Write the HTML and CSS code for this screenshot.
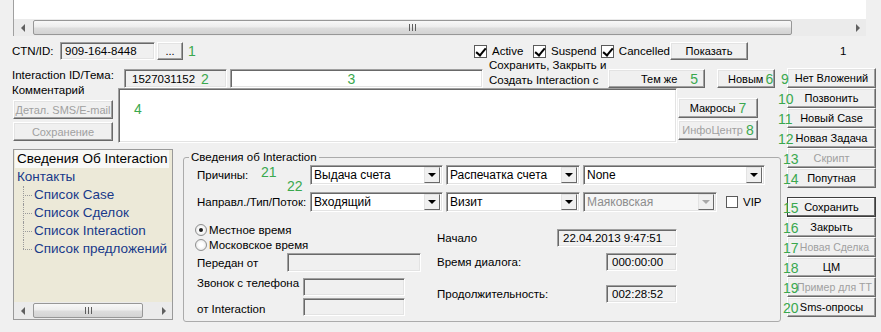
FILE: index.html
```html
<!DOCTYPE html>
<html lang="ru">
<head>
    <meta charset="UTF-8">
    <meta name="viewport" content="width=device-width, initial-scale=1.0">
    <title>Interaction</title>
    <link rel="stylesheet" href="styles.css">
</head>
<body>

    <div class="top-pane">
        <div class="hscroll top-scroll">
            <span class="arrow arrow-left"></span>
            <div class="track"><div class="thumb"><span class="grip"></span></div></div>
            <span class="arrow arrow-right"></span>
        </div>
    </div>

    <div class="row-ctn">
        <div class="ctn-block">
            <span class="lbl lbl-ctn">CTN/ID:</span>
            <div class="field sunken ctn-field">909-164-8448</div>
            <div class="btn btn-dots">...</div>
            <span class="num num-1">1</span>
        </div>
        <label class="chk chk-active"><span class="box checked"></span>Active</label>
        <label class="chk chk-suspend"><span class="box checked"></span>Suspend</label>
        <label class="chk chk-cancel"><span class="box checked"></span>Cancelled</label>
        <div class="btn btn-show">Показать</div>
        <span class="counter">1</span>
    </div>

    <div class="main">
        <div class="left">
            <div class="row-id">
                <span class="lbl lbl-id">Interaction ID/Тема:</span>
                <div class="field sunken id-field">1527031152<span class="num">2</span></div>
                <div class="field sunken topic-field"><span class="num">3</span></div>
                <div class="save-note">Сохранить, Закрыть и<br>Создать Interaction с</div>
                <div class="btn btn-same">Тем же<span class="num">5</span></div>
                <div class="btn btn-new">Новым<span class="num">6</span></div>
            </div>

            <div class="row-comment">
                <div class="comment-side">
                    <span class="lbl lbl-comment">Комментарий</span>
                    <div class="btn disabled side-btn">Детал. SMS/E-mail</div>
                    <div class="btn disabled side-btn side-save">Сохранение</div>
                </div>
                <div class="comment-box sunken"><span class="num">4</span></div>
                <div class="macro-side">
                    <div class="btn macro-btn">Макросы&nbsp;<span class="num">7</span></div>
                    <div class="btn disabled macro-btn">ИнфоЦентр&nbsp;<span class="num">8</span></div>
                </div>
            </div>

            <div class="row-bottom">
                <div class="tree">
                    <ul class="tree-list">
                        <li><span class="node selected">Сведения Об Interaction</span></li>
                        <li><span class="node link">Контакты</span>
                            <ul class="branch">
                                <li><span class="node link">Список Case</span></li>
                                <li><span class="node link">Список Сделок</span></li>
                                <li><span class="node link">Список Interaction</span></li>
                                <li><span class="node link">Список предложений</span></li>
                            </ul>
                        </li>
                    </ul>
                    <div class="hscroll tree-scroll">
                        <span class="arrow arrow-left"></span>
                        <div class="track"><div class="thumb"><span class="grip"></span></div></div>
                        <span class="arrow arrow-right"></span>
                    </div>
                </div>

                <fieldset class="group">
                    <legend>Сведения об Interaction</legend>
                    <div class="group-body">
                        <div class="grow">
                            <span class="glbl">Причины:<span class="num n21">21</span><span class="num n22">22</span></span>
                            <div class="combo sunken c-1"><span class="val">Выдача счета</span><span class="drop"></span></div>
                            <div class="combo sunken c-2"><span class="val">Распечатка счета</span><span class="drop"></span></div>
                            <div class="combo sunken c-3"><span class="val">None</span><span class="drop"></span></div>
                        </div>
                        <div class="grow">
                            <span class="glbl">Направл./Тип/Поток:</span>
                            <div class="combo sunken c-1"><span class="val">Входящий</span><span class="drop"></span></div>
                            <div class="combo sunken c-2"><span class="val">Визит</span><span class="drop"></span></div>
                            <div class="combo sunken c-4 disabled"><span class="val">Маяковская</span><span class="drop"></span></div>
                            <label class="chk chk-vip"><span class="box"></span>VIP</label>
                        </div>

                        <div class="times">
                            <div class="tcol-left">
                                <label class="radio"><span class="dot on"></span>Местное время</label>
                                <label class="radio"><span class="dot"></span>Московское время</label>
                                <div class="trow r-from">
                                    <span class="lbl w-from">Передан от</span>
                                    <div class="field sunken f-from"></div>
                                </div>
                                <div class="trow r-call">
                                    <span class="lbl w-call top">Звонок с телефона</span>
                                    <div class="field sunken f-call"></div>
                                </div>
                                <div class="trow r-int">
                                    <span class="lbl w-call bottom">от Interaction</span>
                                    <div class="field sunken f-call"></div>
                                </div>
                            </div>
                            <div class="tcol-right">
                                <div class="trow r-start">
                                    <span class="lbl w-start">Начало</span>
                                    <div class="field sunken f-start">22.04.2013 9:47:51</div>
                                </div>
                                <div class="trow r-dlg">
                                    <span class="lbl w-dlg">Время диалога:</span>
                                    <div class="field sunken f-time">000:00:00</div>
                                </div>
                                <div class="trow r-dur">
                                    <span class="lbl w-dlg">Продолжительность:</span>
                                    <div class="field sunken f-time">002:28:52</div>
                                </div>
                            </div>
                        </div>
                    </div>
                </fieldset>
            </div>
        </div>

        <div class="actions">
            <div class="btn act"><span class="num mid">9</span>Нет Вложений</div>
            <div class="btn act"><span class="num out">10</span>Позвонить</div>
            <div class="btn act"><span class="num out">11</span>Новый Case</div>
            <div class="btn act"><span class="num out">12</span>Новая Задача</div>
            <div class="btn act disabled"><span class="num">13</span>Скрипт</div>
            <div class="btn act"><span class="num">14</span>Попутная</div>
            <div class="btn act default gap"><span class="num">15</span>Сохранить</div>
            <div class="btn act"><span class="num">16</span>Закрыть</div>
            <div class="btn act disabled shift"><span class="num">17</span>Новая Сделка</div>
            <div class="btn act"><span class="num">18</span>ЦМ</div>
            <div class="btn act disabled shift"><span class="num">19</span>Пример для ТТ</div>
            <div class="btn act"><span class="num">20</span>Sms-опросы</div>
        </div>
    </div>

</body>
</html>
```

FILE: styles.css
```css
* {
    box-sizing: border-box;
}
body {
    margin: 0;
    width: 881px;
    height: 332px;
    overflow: hidden;
    background: #f0f0f0;
    color: #000;
    font-family: "Liberation Sans", Arial, sans-serif;
    font-size: 11.5px;
}
.num {
    color: #3aa84e;
    font-size: 14px;
    line-height: 16px;
}
.lbl {
    flex-shrink: 0;
    white-space: nowrap;
}

/* scrollbars */
.hscroll {
    display: flex;
    height: 17px;
    background: #ebebeb;
    flex-shrink: 0;
}
.arrow {
    width: 17px;
    display: flex;
    align-items: center;
    justify-content: center;
    flex-shrink: 0;
}
.arrow-left::before {
    content: "";
    border-style: solid;
    border-width: 4px 4px 4px 0;
    border-color: transparent #606060 transparent transparent;
}
.arrow-right::before {
    content: "";
    border-style: solid;
    border-width: 4px 0 4px 4px;
    border-color: transparent transparent transparent #606060;
}
.track {
    flex: 1;
    display: flex;
    align-items: center;
    padding: 0 2px;
}
.thumb {
    height: 15px;
    border: 1px solid #979797;
    border-radius: 2px;
    background: linear-gradient(#f8f8f8, #ededed 45%, #dddddd 55%, #d3d3d3);
    display: flex;
    align-items: center;
    justify-content: center;
}
.grip {
    width: 7px;
    height: 7px;
    background: repeating-linear-gradient(90deg, #5e5e5e 0 1px, transparent 1px 3px);
}
.top-scroll .thumb { width: 759px; }
.tree-scroll .thumb { width: 110px; }

/* 3d look */
.sunken {
    border: 1px solid;
    border-color: #a0a0a0 #fff #fff #a0a0a0;
    box-shadow: inset 1px 1px #696969, inset -1px -1px #e3e3e3;
}
.field {
    height: 18px;
    background: #f0f0f0;
    display: flex;
    align-items: center;
    padding: 0 4px;
    white-space: nowrap;
    flex-shrink: 0;
}
.btn {
    display: flex;
    align-items: center;
    justify-content: center;
    height: 20px;
    background: #f0f0f0;
    border: 1px solid;
    border-color: #fff #696969 #696969 #fff;
    box-shadow: inset -1px -1px #a0a0a0, inset 1px 1px #e3e3e3;
    white-space: nowrap;
    font-size: 11px;
    flex-shrink: 0;
}
.btn.disabled {
    color: #a0a0a0;
}
.chk {
    display: flex;
    align-items: center;
    gap: 5px;
    flex-shrink: 0;
}
.box {
    width: 13px;
    height: 13px;
    border: 1px solid #5a5a5a;
    background: #fff;
    position: relative;
}
.box.checked::after {
    content: "";
    position: absolute;
    left: 3px;
    top: 0;
    width: 4px;
    height: 8px;
    border: solid #000;
    border-width: 0 2px 2px 0;
    transform: rotate(40deg);
}

/* top pane */
.top-pane {
    margin-left: 13px;
    width: 853px;
    height: 36px;
    background: #fff;
    border-left: 1px solid #a0a0a0;
    display: flex;
    align-items: flex-end;
}
.top-scroll {
    width: 100%;
}

/* ctn row */
.row-ctn {
    display: flex;
    align-items: center;
    height: 18px;
    margin-top: 6px;
}
.ctn-block {
    display: flex;
    align-items: center;
    width: 474px;
    padding-left: 12px;
    flex-shrink: 0;
}
.lbl-ctn { width: 48px; }
.ctn-field { width: 95px; }
.btn-dots {
    margin-left: 2px;
    width: 26px;
    height: 18px;
}
.num-1 { margin-left: 5px; }
.chk-active { width: 59px; }
.chk-suspend { width: 68px; }
.chk-cancel { width: 69px; }
.btn-show {
    width: 78px;
    height: 18px;
}
.counter { margin-left: 92px; }

/* main area */
.main {
    display: flex;
    margin-top: 8px;
}
.left {
    width: 781px;
    flex-shrink: 0;
}
.row-id {
    display: flex;
    align-items: flex-end;
    height: 20px;
}
.lbl-id {
    margin-left: 12px;
    width: 112px;
    align-self: flex-start;
    line-height: 14px;
}
.id-field {
    width: 103px;
    height: 19px;
    padding-left: 7px;
}
.id-field .num { margin-left: 6px; }
.topic-field {
    margin-left: 3px;
    width: 253px;
    height: 19px;
    background: #fff;
    justify-content: center;
    padding-right: 14px;
}
.save-note {
    margin-left: 6px;
    width: 119px;
    height: 30px;
    line-height: 15px;
    white-space: nowrap;
    flex-shrink: 0;
}
.btn-same {
    width: 97px;
    height: 19px;
    justify-content: flex-start;
    padding-left: 32px;
}
.btn-same .num { margin-left: 13px; }
.btn-new {
    margin-left: 12px;
    width: 58px;
    height: 19px;
    justify-content: flex-start;
    padding-left: 10px;
}
.btn-new .num { margin-left: 2px; }

/* comment row */
.row-comment {
    display: flex;
    height: 55px;
}
.comment-side {
    width: 118px;
    display: flex;
    flex-direction: column;
    flex-shrink: 0;
}
.lbl-comment {
    margin: -4px 0 0 12px;
    line-height: 13px;
}
.side-btn {
    margin: 3px 0 0 13px;
    width: 100px;
    height: 19px;
}
.comment-box {
    width: 559px;
    height: 55px;
    background: #fff;
    padding: 12px 0 0 15px;
    flex-shrink: 0;
}
.macro-side {
    margin-left: 1px;
    width: 80px;
    padding-top: 10px;
    display: flex;
    flex-direction: column;
    gap: 2px;
}
.macro-btn { width: 80px; }

/* bottom: tree + group */
.row-bottom {
    display: flex;
    margin-top: 6px;
}
.tree {
    margin-left: 13px;
    width: 160px;
    height: 171px;
    background: #ece9d8;
    border: 1px solid #9a9a9a;
    display: flex;
    flex-direction: column;
    flex-shrink: 0;
}
.tree-list {
    flex: 1;
    margin: 0;
    padding: 0;
    list-style: none;
    font-size: 13.5px;
    overflow: hidden;
}
.tree-list li {
    line-height: 18px;
}
.node {
    display: inline-block;
    height: 18px;
    padding: 0 2px;
    margin-left: 1px;
    white-space: nowrap;
}
.node.selected { background: #f8f8f6; }
.node.link { color: #18398a; }
.branch {
    list-style: none;
    margin: 0;
    padding-left: 17px;
}
.branch li {
    position: relative;
}
.branch li::before {
    content: "";
    position: absolute;
    left: -8px;
    top: 9px;
    width: 9px;
    border-top: 1px dotted #9a9a9a;
}
.branch li::after {
    content: "";
    position: absolute;
    left: -8px;
    top: 0;
    bottom: 0;
    border-left: 1px dotted #9a9a9a;
}
.branch li:last-child::after {
    bottom: 9px;
}

.group {
    margin: 1px 0 0 10px;
    padding: 0;
    width: 598px;
    height: 172px;
    min-width: 0;
    border: 1px solid #ababab;
    border-radius: 3px;
    flex-shrink: 0;
}
.group legend {
    margin-left: 5px;
    padding: 0 2px;
    line-height: 14px;
}
.group-body {
    padding: 1px 0 0 13px;
}
.grow {
    display: flex;
    align-items: center;
    height: 20px;
    gap: 3px;
}
.grow + .grow { margin-top: 7px; }
.glbl {
    width: 110px;
    align-self: stretch;
    display: flex;
    align-items: center;
    position: relative;
    white-space: nowrap;
    flex-shrink: 0;
}
.n21 {
    position: absolute;
    left: 64px;
    top: -1px;
}
.n22 {
    position: absolute;
    left: 90px;
    top: 13px;
}
.combo {
    height: 20px;
    background: #fff;
    display: flex;
    align-items: center;
    padding: 0 2px 0 3px;
    font-size: 12px;
    white-space: nowrap;
    flex-shrink: 0;
}
.combo .val { flex: 1; }
.drop {
    width: 16px;
    height: 16px;
    background: #f0f0f0;
    border: 1px solid;
    border-color: #e3e3e3 #696969 #696969 #e3e3e3;
    display: flex;
    align-items: center;
    justify-content: center;
}
.drop::before {
    content: "";
    border-style: solid;
    border-width: 4px 4px 0 4px;
    border-color: #000 transparent transparent transparent;
}
.combo.disabled {
    color: #8d8d8d;
    background: #f6f6f6;
}
.combo.disabled .drop::before {
    border-top-color: #a8a8a8;
}
.c-1 { width: 133px; }
.c-2 { width: 134px; }
.c-3 { width: 182px; }
.c-4 { width: 134px; }
.chk-vip { margin-left: 6px; }
.chk-vip .box {
    width: 12px;
    height: 12px;
}

.times {
    display: flex;
    margin-top: 10px;
}
.tcol-left { width: 224px; }
.tcol-right { margin-left: 16px; }
.radio {
    display: flex;
    align-items: center;
    gap: 2px;
    height: 15px;
    margin-left: -2px;
    white-space: nowrap;
}
.dot {
    width: 12px;
    height: 12px;
    border-radius: 50%;
    border: 1px solid #8e8f8f;
    background: radial-gradient(circle, #fff 30%, #dcdcdc);
    display: flex;
    align-items: center;
    justify-content: center;
}
.dot.on::after {
    content: "";
    width: 4px;
    height: 4px;
    border-radius: 50%;
    background: #1e1e1e;
}
.trow {
    display: flex;
    align-items: center;
    height: 19px;
}
.trow .lbl.top { align-self: flex-start; line-height: 13px; }
.trow .lbl.bottom { align-self: flex-end; line-height: 13px; }
.r-from { margin-top: 1px; }
.r-call { margin-top: 5px; }
.r-int { margin-top: 1px; }
.w-from { width: 90px; }
.w-call { width: 106px; }
.f-from { width: 134px; height: 19px; }
.f-call { width: 102px; }
.r-start { margin-top: 7px; height: 18px; }
.r-dlg { margin-top: 6px; height: 18px; }
.r-dur { margin-top: 14px; height: 18px; }
.w-start { width: 120px; }
.w-dlg { width: 169px; }
.f-start { width: 120px; padding-left: 5px; }
.f-time { width: 71px; padding-left: 5px; }

/* right buttons */
.actions {
    margin-left: 6px;
    width: 89px;
    display: flex;
    flex-direction: column;
    flex-shrink: 0;
}
.act {
    position: relative;
    width: 89px;
}
.act .num {
    position: absolute;
    left: -5px;
    top: 1px;
    line-height: 18px;
}
.act .num.out { left: -10px; }
.act .num.mid { left: -7px; }
.act.shift {
    padding-left: 6px;
    font-size: 10.5px;
}
.act.gap { margin-top: 9px; }
.act.default {
    border-color: #3c3c3c;
    box-shadow: inset -1px -1px #696969, inset 1px 1px #fff;
}
```
